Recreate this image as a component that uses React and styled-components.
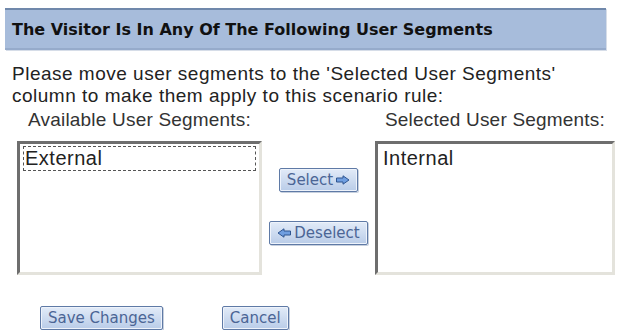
import React from 'react';
import styled, { createGlobalStyle } from 'styled-components';

const GlobalStyle = createGlobalStyle`
  html, body {
    margin: 0;
    padding: 0;
    background: #fff;
  }
`;

function ArrowIcon({ dir }) {
  return (
    <svg width='14' height='10' viewBox='0 0 14 10' style={{ transform: dir === 'left' ? 'scaleX(-1)' : 'none' }}>
      <path d='M0.5 3 H7 V0.8 L13 5 L7 9.2 V7 H0.5 Z' fill='#6f9ee0' stroke='#2f5590' strokeWidth='1' />
    </svg>
  );
}

export default function App() {
  return (
    <>
      <GlobalStyle />
      <Page>
        <Header>The Visitor Is In Any Of The Following User Segments</Header>
        <Intro>
          Please move user segments to the 'Selected User Segments'
          <br />
          column to make them apply to this scenario rule:
        </Intro>
        <Picker>
          <Column>
            <Label>Available User Segments:</Label>
            <ListBox width={245}>
              <Option focused>External</Option>
            </ListBox>
          </Column>
          <Middle>
            <Button>
              Select <ArrowIcon dir='right' />
            </Button>
            <Button>
              <ArrowIcon dir='left' />Deselect
            </Button>
          </Middle>
          <Column>
            <Label>Selected User Segments:</Label>
            <ListBox width={240}>
              <Option>Internal</Option>
            </ListBox>
          </Column>
        </Picker>
        <Footer>
          <Button>Save Changes</Button>
          <Button>Cancel</Button>
        </Footer>
      </Page>
    </>
  );
}

const Page = styled.div`
  width: 618px;
  height: 330px;
  overflow: hidden;
  padding-top: 8px;
  box-sizing: border-box;
  font-family: 'Liberation Sans', Arial, sans-serif;
  color: #1a1a1a;
`;

const Header = styled.div`
  margin-left: 5px;
  width: 601px;
  height: 42px;
  box-sizing: border-box;
  display: flex;
  align-items: center;
  padding-left: 7px;
  background: #a7bcdb;
  border-top: 2px solid #7088ab;
  border-bottom: 2px solid #96abcb;
  box-shadow: 1px 1px 0 #d6dde8;
  font-family: 'DejaVu Sans', Verdana, sans-serif;
  font-weight: bold;
  font-size: 16px;
  color: #111;
`;

const Intro = styled.p`
  margin: 13px 0 0 12px;
  font-size: 19px;
  letter-spacing: 0.5px;
  line-height: 22px;
  color: #222;
`;

const Picker = styled.div`
  display: grid;
  grid-template-columns: 245px 113px 240px;
  margin: 2px 0 0 17px;
`;

const Column = styled.div`
  display: flex;
  flex-direction: column;
  align-items: center;
`;

const Label = styled.div`
  font-size: 19px;
  letter-spacing: 0.2px;
  line-height: 22px;
  height: 22px;
  margin-bottom: 10px;
  color: #333;
`;

const ListBox = styled.div`
  width: ${({ width }) => width}px;
  height: 134px;
  box-sizing: border-box;
  padding: 2px 3px;
  background: #fff;
  border-top: 3px solid #6e6e6e;
  border-left: 3px solid #6e6e6e;
  border-right: 3px solid #e4e3dc;
  border-bottom: 3px solid #e4e3dc;
`;

const Option = styled.div`
  height: 25px;
  box-sizing: border-box;
  display: flex;
  align-items: center;
  padding-left: 1px;
  font-size: 20px;
  letter-spacing: 0.5px;
  color: #222;
  border: 1px dashed ${({ focused }) => (focused ? '#555' : 'transparent')};
`;

const Middle = styled.div`
  display: flex;
  flex-direction: column;
  align-items: center;
  gap: 29px;
  padding-top: 59px;
`;

const Button = styled.button`
  display: inline-flex;
  align-items: center;
  gap: 3px;
  height: 24px;
  padding: 0 7px;
  background: linear-gradient(#e2ebf8, #b9cce8);
  border: 1px solid #5f7aa6;
  border-radius: 2px;
  box-shadow: inset 0 0 0 1px #eef3fb, 1px 1px 0 #c7d0de;
  font-family: 'DejaVu Sans', Verdana, sans-serif;
  font-size: 15px;
  color: #4b6595;
  cursor: pointer;
`;

const Footer = styled.div`
  display: flex;
  gap: 59px;
  margin: 31px 0 0 40px;
`;
